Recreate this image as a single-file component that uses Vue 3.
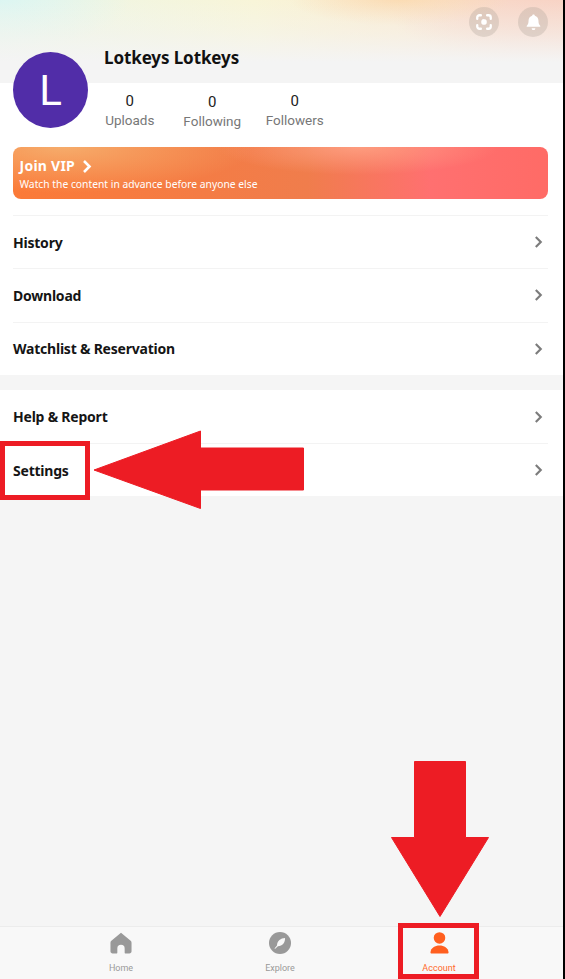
<script setup>
const stats = [
  { label: "Uploads", value: 0 },
  { label: "Following", value: 0, low: true },
  { label: "Followers", value: 0 },
];
const firstGroup = ["History", "Download", "Watchlist & Reservation"];
const secondGroup = ["Help & Report", "Settings"];
</script>

<template>
  <div class="page">
    <div class="screen">
      <header class="hero">
        <div class="hero-actions">
          <span class="round-btn">
            <svg viewBox="0 0 20 20" width="18" height="18" fill="none" stroke="#fff" stroke-width="2.6" stroke-linecap="round">
              <path d="M2.500 6.500V5A2.500 2.500 0 0 1 5 2.500h1.500M13.500 2.500H15A2.500 2.500 0 0 1 17.500 5v1.500M17.500 13.500V15a2.500 2.500 0 0 1-2.500 2.500h-1.500M6.500 17.500H5A2.500 2.500 0 0 1 2.500 15v-1.500" />
              <rect x="7.500" y="7.500" width="5" height="5" rx="1.500" fill="#fff" stroke-width="1" />
            </svg>
          </span>
          <span class="round-btn">
            <svg viewBox="0 0 20 20" width="19" height="19" fill="#fff">
              <path d="M10 1.600c.8 0 1.300.5 1.400 1.200 2.400.6 3.800 2.700 3.800 5.200 0 3 .6 4.300 1.800 5.400.4.400.2 1.100-.4 1.100H3.400c-.6 0-.8-.7-.4-1.100 1.200-1.100 1.800-2.400 1.800-5.400 0-2.500 1.400-4.600 3.800-5.200.1-.7.6-1.200 1.400-1.200z" />
              <path d="M8 16h4a2 2 0 0 1-4 0z" />
            </svg>
          </span>
        </div>
      </header>

      <div class="sheet">
        <section class="profile">
          <div class="avatar">L</div>
          <div class="profile-info">
            <h1 class="name">Lotkeys Lotkeys</h1>
            <div class="stats">
              <div v-for="s in stats" :key="s.label" class="stat" :class="{ low: s.low }">
                <span class="stat-value">{{ s.value }}</span>
                <span class="stat-label">{{ s.label }}</span>
              </div>
            </div>
          </div>
        </section>

        <div class="vip">
          <div class="vip-title">
            Join VIP
            <svg viewBox="0 0 10 14" width="10" height="15" fill="none" stroke="#fff" stroke-width="2.600">
              <path d="M2 1.500 7.500 7 2 12.500" />
            </svg>
          </div>
          <div class="vip-sub">Watch the content in advance before anyone else</div>
        </div>

        <ul class="menu first">
          <li v-for="item in firstGroup" :key="item" class="menu-row">
            <span>{{ item }}</span>
            <svg class="chev" viewBox="0 0 10 14" width="9" height="14" fill="none" stroke="#7c7c7c" stroke-width="2.400">
              <path d="M2 1.500 7.500 7 2 12.500" />
            </svg>
          </li>
        </ul>
      </div>

      <ul class="menu second">
        <li v-for="item in secondGroup" :key="item" class="menu-row">
          <span>{{ item }}</span>
          <svg class="chev" viewBox="0 0 10 14" width="9" height="14" fill="none" stroke="#7c7c7c" stroke-width="2.400">
            <path d="M2 1.500 7.500 7 2 12.500" />
          </svg>
        </li>
      </ul>

      <div class="spacer"></div>

      <nav class="tabs">
        <div class="tab">
          <svg viewBox="0 0 24 24" width="22" height="22" fill="#999">
            <path d="M12 .800 22.500 9.500c.6.500 1 1.300 1 2.100V21c0 1.400-1 2.400-2.400 2.400h-4.400c-.4 0-.7-.3-.7-.7V18a4 4 0 0 0-8 0v4.700c0 .4-.3.700-.7.700H2.900C1.500 23.400.5 22.400.5 21v-9.400c0-.8.4-1.600 1-2.100z" />
          </svg>
          <span>Home</span>
        </div>
        <div class="tab">
          <svg viewBox="0 0 24 24" width="22" height="22">
            <circle cx="12" cy="12" r="12" fill="#999" />
            <path d="M17.500 6.500c.3 4.800-2.600 8.700-7.800 9.100l-2.900 2.600c-.4.300-.9-.2-.6-.6l2.500-3C9 9.600 12.800 6.600 17.500 6.500z" fill="#f8f8f8" />
          </svg>
          <span>Explore</span>
        </div>
        <div class="tab active">
          <svg viewBox="0 0 20 24" width="19" height="22" fill="#ff5f1f">
            <circle cx="10" cy="6.500" r="6.300" />
            <path d="M1.500 23.500C.6 23.500 0 22.900.1 22 .7 17.500 5 14.800 10 14.800s9.300 2.700 9.900 7.200c.1.900-.5 1.500-1.400 1.500z" />
          </svg>
          <span>Account</span>
        </div>
      </nav>

      <!-- red markup drawn over the screenshot -->
      <div class="mark-box settings-box"></div>
      <div class="mark-box account-box"></div>
      <svg class="arrows" viewBox="0 0 563 979" width="563" height="979">
        <path fill="#ed1c24" stroke="#ed1c24" stroke-width="1" stroke-linejoin="round" d="M94 470 200.500 431V448H303.500V490H200.500V508.500z" />
        <path fill="#ed1c24" stroke="#ed1c24" stroke-width="1" stroke-linejoin="round" d="M414.500 761.500H465.500V837.500H488.500L440 916.500 391.500 837.500H414.500z" />
      </svg>
    </div>
  </div>
</template>

<style>
html,
body {
  margin: 0;
  background: #000;
}
</style>

<style scoped>
.page {
  width: 565px;
  height: 979px;
  background: #000;
  overflow: hidden;
}

.screen {
  position: relative;
  width: 563px;
  height: 979px;
  display: flex;
  flex-direction: column;
  background: #f5f5f5;
  font-family: "Noto Sans", sans-serif;
  overflow: hidden;
}

.hero {
  height: 83px;
  box-sizing: border-box;
  flex-shrink: 0;
  display: flex;
  justify-content: flex-end;
  padding: 7px 15px 0 0;
  background:
    linear-gradient(180deg, rgba(244, 244, 244, 0) 0%, rgba(244, 244, 244, 0.45) 40%, #f4f4f4 75%),
    radial-gradient(ellipse 130px 50px at 0 0, #dcf6f2 0%, rgba(220, 246, 242, 0) 100%),
    radial-gradient(ellipse 110px 26px at 400px 0, #fbdcb4 0%, rgba(251, 220, 180, 0) 100%),
    radial-gradient(ellipse 180px 70px at 100% 0, #f8d3c5 0%, #f8d8c8 50%, rgba(248, 216, 200, 0) 100%),
    linear-gradient(90deg, #ecf6e8 0%, #f8f5d8 45%, #faecd2 70%, #f8dccd 100%);
}

.hero-actions {
  display: flex;
  gap: 19px;
}

.round-btn {
  width: 30px;
  height: 30px;
  border-radius: 50%;
  background: rgba(170, 160, 150, 0.3);
  display: flex;
  align-items: center;
  justify-content: center;
}

.sheet {
  background: #fff;
  flex-shrink: 0;
}

.profile {
  height: 64px;
  padding-left: 13px;
  display: flex;
}

.avatar {
  width: 75px;
  height: 76px;
  margin-top: -31px;
  border-radius: 50%;
  background: #512da8;
  color: #fff;
  font-family: Roboto, sans-serif;
  font-size: 42px;
  display: flex;
  align-items: center;
  justify-content: center;
}

.profile-info {
  margin-left: 16px;
}

.name {
  margin: -37px 0 0;
  height: 24px;
  line-height: 24px;
  font-size: 17px;
  font-weight: 700;
  color: #111;
  letter-spacing: -0.1px;
}

.stats {
  display: flex;
  margin-top: 22px;
  margin-left: -15.500px;
}

.stat {
  width: 82.500px;
  display: flex;
  flex-direction: column;
  align-items: center;
  font-family: Roboto, sans-serif;
}

.stat.low {
  padding-top: 1px;
}

.stat-value {
  font-size: 15px;
  line-height: 18px;
  color: #222;
}

.stat-label {
  font-size: 13.500px;
  line-height: 20px;
  color: #777;
}

.vip {
  height: 52px;
  box-sizing: border-box;
  width: 535px;
  margin: 0 13px;
  padding: 9px 6.500px 0;
  border-radius: 8px;
  color: #fff;
  background:
    radial-gradient(ellipse 140px 28px at 345px 0, rgba(255, 165, 135, 0.8) 0%, rgba(255, 165, 135, 0) 100%),
    radial-gradient(ellipse 190px 46px at 50px 0, rgba(245, 180, 115, 0.85) 0%, rgba(245, 180, 115, 0) 100%),
    linear-gradient(90deg, #fb7a38 0%, #f07d4c 55%, #ff7070 78%, #ff6b66 100%);
}

.vip-title {
  display: flex;
  align-items: center;
  gap: 7px;
  font-size: 14px;
  line-height: 20px;
  font-weight: 700;
  letter-spacing: 0.25px;
}

.vip-sub {
  font-size: 10.300px;
  line-height: 15px;
  margin-top: 1px;
}

.menu {
  list-style: none;
  margin: 0;
  padding: 0 15px 0 13px;
  background: #fff;
}

.first {
  padding-top: 16px;
}

.second {
  margin-top: 15px;
  flex-shrink: 0;
}

.menu-row {
  height: 53.300px;
  box-sizing: border-box;
  border-top: 1px solid #f3f3f3;
  display: flex;
  align-items: center;
  justify-content: space-between;
  font-size: 14px;
  font-weight: 700;
  letter-spacing: -0.22px;
  color: #151515;
}

.second .menu-row:first-child {
  border-top: 0;
}

.chev {
  margin-right: 5px;
}

.spacer {
  flex: 1;
}

.tabs {
  height: 53px;
  flex-shrink: 0;
  box-sizing: border-box;
  border-top: 1px solid #ececec;
  background: #f8f8f8;
  display: flex;
  justify-content: center;
  padding-right: 3px;
}

.tab {
  width: 159px;
  padding-top: 5px;
  display: flex;
  flex-direction: column;
  align-items: center;
  font-family: Roboto, sans-serif;
  font-size: 9px;
  color: #9a9a9a;
  gap: 9px;
}

.tab.active {
  color: #ff6a2b;
}

.mark-box {
  position: absolute;
  box-sizing: border-box;
  border: 5px solid #ed1c24;
}

.settings-box {
  left: 0;
  top: 441px;
  width: 90px;
  height: 59px;
}

.account-box {
  left: 398px;
  top: 923px;
  width: 81px;
  height: 56px;
}

.arrows {
  position: absolute;
  left: 0;
  top: 0;
  pointer-events: none;
}
</style>
